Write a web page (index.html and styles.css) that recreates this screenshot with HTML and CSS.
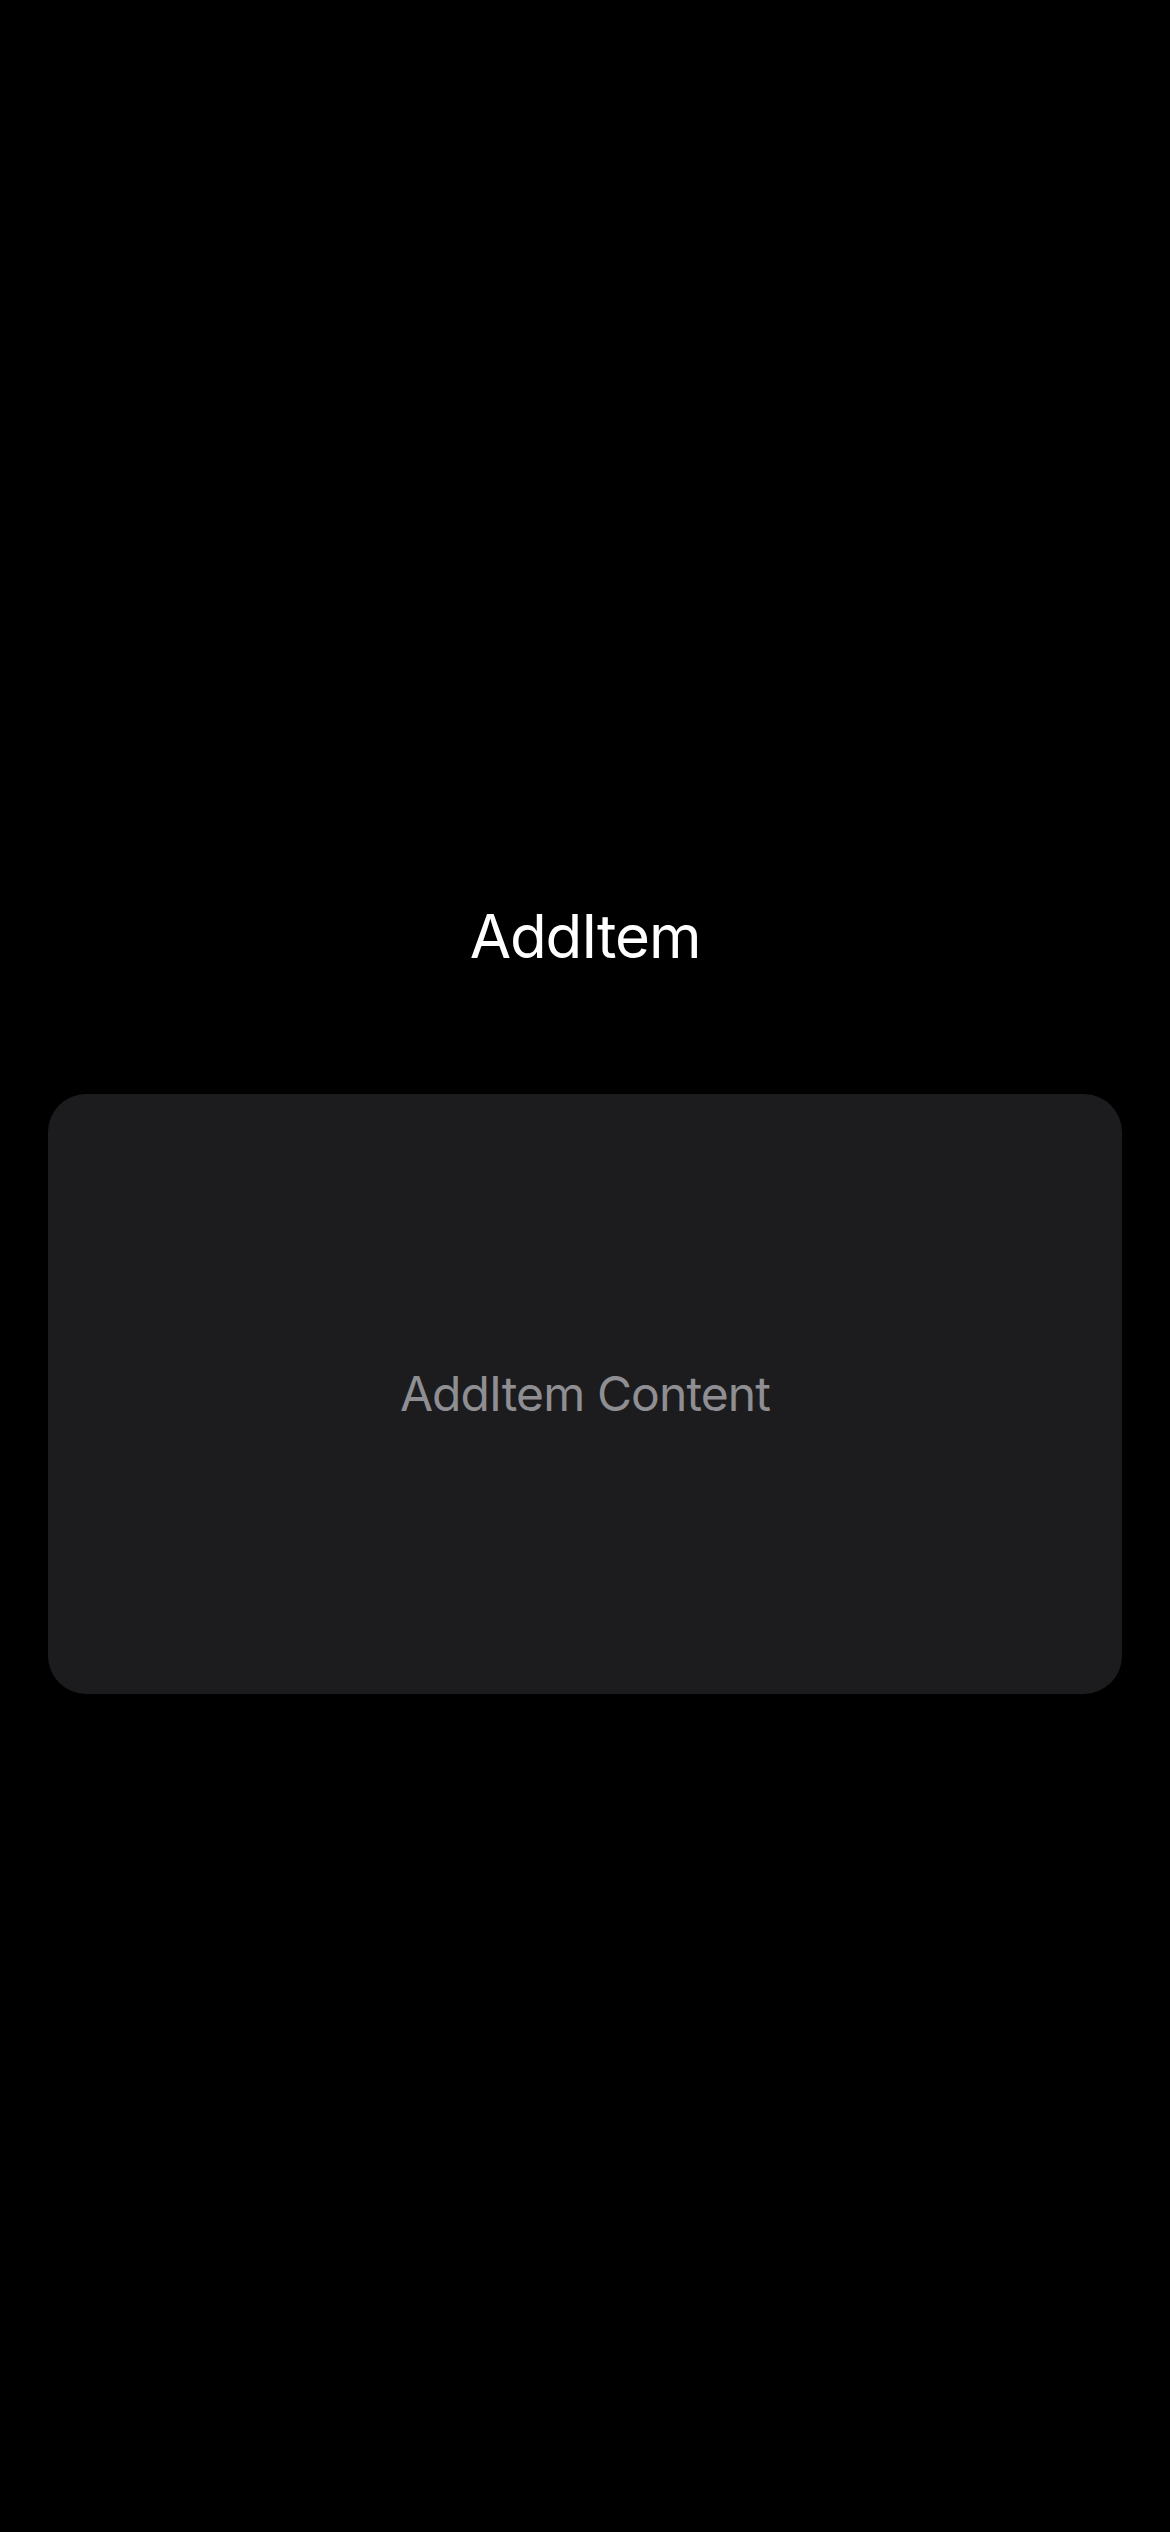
FILE: index.html
```html
<!DOCTYPE html>
<html>
<head>
<meta charset="utf-8">
<link rel="stylesheet" href="styles.css">
</head>
<body>
<main class="screen">
  <h1 class="title">AddItem</h1>
  <section class="card">
    <p class="card-text">AddItem Content</p>
  </section>
</main>
</body>
</html>
```
FILE: styles.css
```css
html, body {
  margin: 0;
  padding: 0;
  background: #000;
}
body {
  width: 1170px;
  height: 2532px;
  font-family: Inter, "Noto Sans", "Liberation Sans", sans-serif;
}
.screen {
  display: flex;
  flex-direction: column;
  align-items: center;
  padding: 900px 48px 0;
}
.title {
  margin: 0;
  font-size: 60px;
  font-weight: 400;
  line-height: 72px;
  color: #fff;
  letter-spacing: -1.1px;
}
.card {
  margin-top: 122px;
  width: 100%;
  height: 600px;
  background: #1c1c1e;
  border-radius: 38px;
  display: flex;
  align-items: center;
  justify-content: center;
}
.card-text {
  margin: 0;
  font-size: 48px;
  line-height: 58px;
  color: #8e8e93;
  letter-spacing: -0.9px;
}
```
